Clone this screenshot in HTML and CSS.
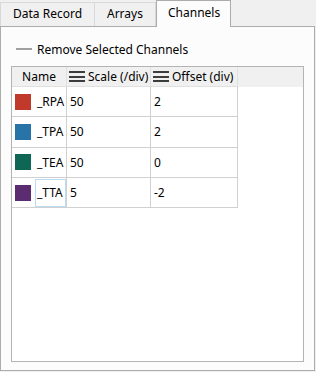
FILE: index.html
```html
<!DOCTYPE html>
<html lang="en">
<head>
    <meta charset="UTF-8">
    <title>Channels</title>
<link rel="stylesheet" href="styles.css">
</head>
<body>
    <div class="tabs">
        <div class="tab tab-data">Data Record</div>
        <div class="tab tab-arrays">Arrays</div>
        <div class="tab tab-channels active">Channels</div>
    </div>

    <div class="panel">
        <div class="remove">
            <span class="dash"></span>
            <span>Remove Selected Channels</span>
        </div>

        <div class="grid">
            <div class="row head">
                <div class="cell name">Name</div>
                <div class="cell"><span class="menu"><i></i><i></i><i></i></span>Scale (/div)</div>
                <div class="cell"><span class="menu"><i></i><i></i><i></i></span>Offset (div)</div>
            </div>
            <div class="row">
                <div class="cell"><span class="swatch red"></span><span class="label">_RPA</span></div>
                <div class="cell">50</div>
                <div class="cell">2</div>
            </div>
            <div class="row">
                <div class="cell"><span class="swatch blue"></span><span class="label">_TPA</span></div>
                <div class="cell">50</div>
                <div class="cell">2</div>
            </div>
            <div class="row">
                <div class="cell"><span class="swatch green"></span><span class="label">_TEA</span></div>
                <div class="cell">50</div>
                <div class="cell">0</div>
            </div>
            <div class="row">
                <div class="cell"><span class="swatch purple"></span><span class="label focus">_TTA</span></div>
                <div class="cell">5</div>
                <div class="cell">-2</div>
            </div>
        </div>
    </div>
</body>
</html>
```

FILE: styles.css
```css
body{
    margin: 0;
    background: #f0f0f0;
    font-family: "Noto Sans", "Liberation Sans", sans-serif;
    font-size: 12px;
    color: #000;
}

/* tab strip */
.tabs{
    display: flex;
    align-items: flex-end;
    height: 26px;
}
.tab{
    box-sizing: border-box;
    height: 24px;
    line-height: 22px;
    padding-left: 12px;
    border: 1px solid #d9d9d9;
    border-bottom: none;
    background: #f0f0f0;
}
.tab-data{
    width: 95px;
}
.tab-arrays{
    width: 61px;
    border-left: none;
}
.tab.active{
    position: relative;
    width: 75px;
    height: 27px;
    margin-bottom: -1px;
    line-height: 24px;
    padding-left: 11px;
    border-color: #acacac;
    background: #fcfcfc;
    z-index: 1;
}

.panel{
    box-sizing: border-box;
    width: 315px;
    height: 345px;
    border: 1px solid #acacac;
    background: #fcfcfc;
}

.remove{
    display: flex;
    align-items: center;
    height: 20px;
    margin-top: 12px;
    padding-left: 15px;
    gap: 5px;
}
.dash{
    width: 16px;
    height: 2px;
    background: #a0a0a0;
}

/* channels grid */
.grid{
    box-sizing: border-box;
    width: 293px;
    height: 296px;
    margin: 7px 0 0 10px;
    border: 1px solid #b4b4b4;
    background: #fff;
}
.row{
    display: grid;
    grid-template-columns: 55px 84px 87px;
    height: 30.34px;
}
.cell{
    box-sizing: border-box;
    display: flex;
    align-items: center;
    padding-left: 3px;
    border-right: 1px solid #d0d0d0;
    border-bottom: 1px solid #d0d0d0;
}
.head{
    height: 20px;
    background: #f0f0f0;
}
.head .cell{
    border-color: #e0e0e0;
    padding-left: 2px;
}
.head .name{
    justify-content: center;
    padding-left: 0;
}
.menu{
    display: flex;
    flex-direction: column;
    justify-content: space-between;
    width: 16px;
    height: 11px;
    margin-right: 3px;
}
.menu i{
    height: 2px;
    background: #3c3c3c;
}

.swatch{
    width: 16px;
    height: 16px;
    margin-right: 6px;
    flex: none;
}
.red{ background: #c0392b; }
.blue{ background: #2874a6; }
.green{ background: #0e6655; }
.purple{ background: #5b2c6f; }

.label{
    display: flex;
    align-items: center;
    height: 28px;
}
.focus{
    box-sizing: border-box;
    width: 31px;
    margin-left: -2px;
    padding-left: 1px;
    border: 1px solid #bcdcf4;
}
```
